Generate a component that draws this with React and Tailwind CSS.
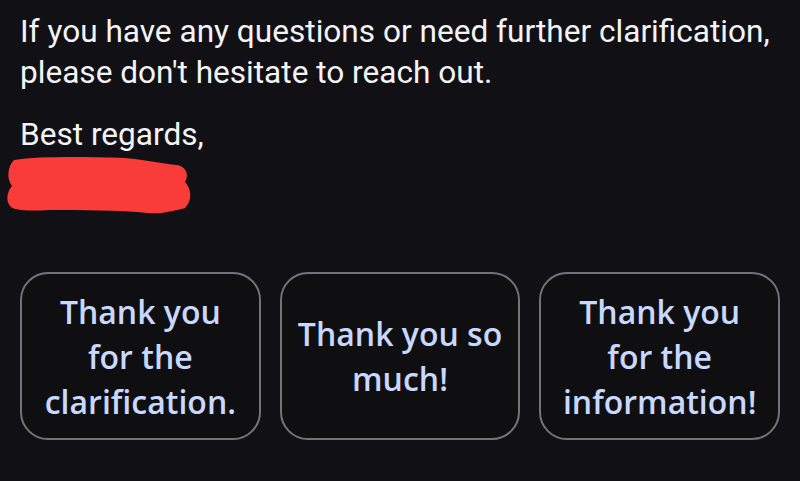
import React from 'react';

const replies = [
  ['Thank you', 'for the', 'clarification.'],
  ['Thank you so', 'much!'],
  ['Thank you', 'for the', 'information!'],
];

// scribbled-out signature
function Scribble() {
  return (
    <svg width="200" height="64" viewBox="0 0 200 64" className="block">
      <path
        d="M14 6 C40 2 90 3 124 4 C140 5 160 9 176 11 C187 12 189 22 185 28 C191 34 193 46 185 54 C170 58 160 60 148 59 C120 56 80 56 50 56 C30 57 14 57 10 52 C5 46 8 36 12 32 C6 24 8 12 14 6 Z"
        fill="#f93c3a"
      />
    </svg>
  );
}

function Reply({ lines }) {
  return (
    <button className="flex h-[168px] flex-1 flex-col items-center justify-center rounded-[28px] border-2 border-[#74737a] bg-[#0f0f12] text-[32px] font-semibold leading-[45px] text-[#c8d8ff] [font-family:'Open_Sans',sans-serif]">
      {lines.map((l) => (
        <span key={l}>{l}</span>
      ))}
    </button>
  );
}

export default function App() {
  return (
    <div className="h-[481px] w-[800px] overflow-hidden bg-[#111115] pt-[11px] [font-family:Roboto,sans-serif]">
      <div className="px-[20px] text-[31.6px] leading-[41px] text-[#f4f4f6]">
        <p>If you have any questions or need further clarification,</p>
        <p>please don't hesitate to reach out.</p>
        <p className="mt-[21px]">Best regards,</p>
      </div>
      <div className="-mt-[1px]">
        <Scribble />
      </div>
      <div className="mt-[54px] flex gap-[19px] px-[20px]">
        {replies.map((r, i) => (
          <Reply key={i} lines={r} />
        ))}
      </div>
    </div>
  );
}
